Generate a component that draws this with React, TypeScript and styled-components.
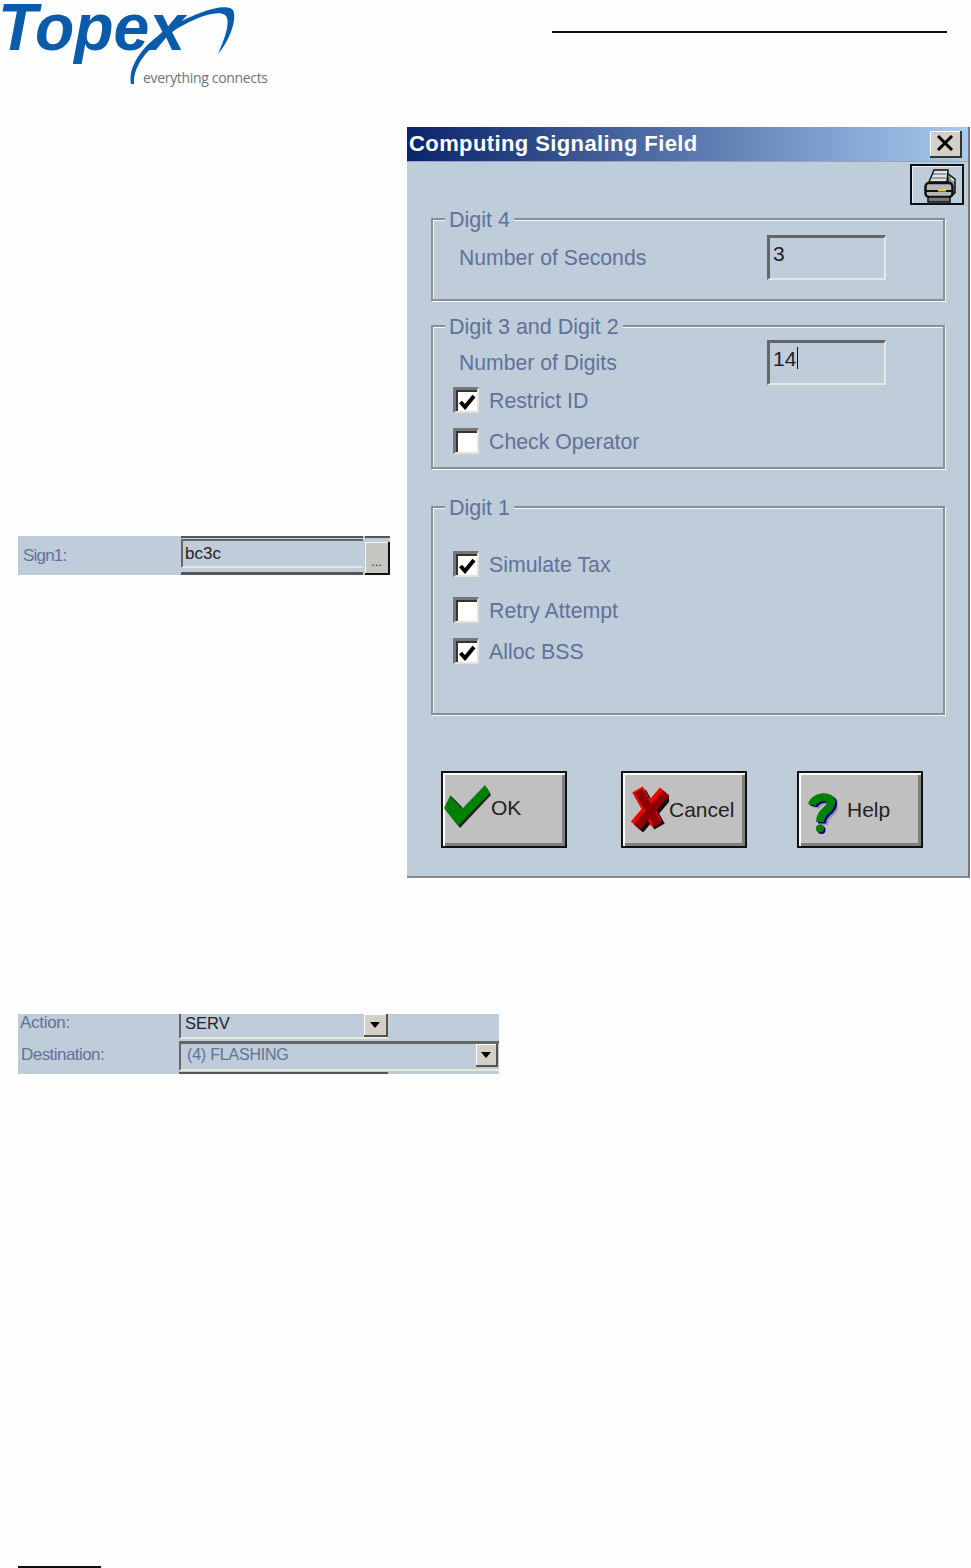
import styled, { createGlobalStyle } from "styled-components"

const panelColor = "#bfccd9"
const mutedText = "#5f7299"

const GlobalStyle = createGlobalStyle`
  html, body {
    margin: 0;
    padding: 0;
    background: #fff;
  }
  * {
    box-sizing: border-box;
  }
`

const Page = styled.div`
  width: 971px;
  height: 1568px;
  overflow: hidden;
  background: #fefefe;
  font-family: "Liberation Sans", Arial, sans-serif;
`

const Header = styled.header`
  display: flex;
  justify-content: space-between;
  align-items: flex-start;
  height: 127px;
`

const HeaderRule = styled.div`
  width: 395px;
  height: 2px;
  margin: 31px 24px 0 0;
  background: #111;
`

const MainRow = styled.div`
  display: flex;
  align-items: flex-start;
`

const LeftColumn = styled.div`
  width: 407px;
  padding: 409px 0 0 18px;
`

const Strip = styled.div<{ $width: number; $height: number }>`
  width: ${({ $width }) => $width}px;
  height: ${({ $height }) => $height}px;
  background: ${panelColor};
  overflow: hidden;
  font-size: 17px;
  color: ${mutedText};
`

const SignRow = styled.div`
  display: flex;
  height: 39px;
`

const StripLabel = styled.div<{ $indent?: number }>`
  width: 161px;
  padding-left: ${({ $indent }) => $indent ?? 3}px;
  letter-spacing: -0.3px;
`

const SignLabel = styled(StripLabel)`
  padding-top: 10px;
  width: 163px;
  padding-left: 5px;
  letter-spacing: -0.8px;
`

const SignStack = styled.div`
  width: 182px;
  display: flex;
  flex-direction: column;
`

const CutEdge = styled.div<{ $height: number }>`
  height: ${({ $height }) => $height}px;
  background: #555;
`

const SignInput = styled.div`
  height: 29px;
  margin: 1px 0 4px;
  padding: 3px 0 0 2px;
  border-top: 2px solid #666;
  border-left: 2px solid #666;
  border-bottom: 2px solid #e6e6de;
  color: #222;
  font-size: 17px;
`

const EllipsisColumn = styled.div`
  width: 25px;
  margin-left: 2px;
  display: flex;
  flex-direction: column;
`

const EllipsisButton = styled.div`
  height: 33px;
  margin-top: 4px;
  background: #c6c6c0;
  border-right: 2px solid #111;
  border-bottom: 2px solid #111;
  box-shadow: inset 1px 1px 0 #f4f4f0;
  display: flex;
  align-items: flex-end;
  justify-content: center;
  color: #333;
  font-size: 13px;
  line-height: 22px;
`

const Dialog = styled.section`
  width: 563px;
  height: 751px;
  background: ${panelColor};
  border-right: 2px solid #777;
  border-bottom: 2px solid #888;
  display: flex;
  flex-direction: column;
`

const TitleBar = styled.div`
  flex: none;
  height: 35px;
  display: flex;
  align-items: center;
  justify-content: space-between;
  padding: 0 6px 0 2px;
  background: linear-gradient(90deg, #0a246a, #a6caf0);
  border-bottom: 1px solid #9aa4b2;
`

const TitleText = styled.h1`
  margin: 0;
  color: #fff;
  font-size: 22px;
  font-weight: 700;
  letter-spacing: 0.4px;
`

const CloseButton = styled.div`
  width: 32px;
  height: 27px;
  background: #d4d0c8;
  border-right: 2px solid #333;
  border-bottom: 2px solid #333;
  box-shadow: inset 1px 1px 0 #fff;
  display: flex;
  align-items: center;
  justify-content: center;
`

const Toolbar = styled.div`
  flex: none;
  display: flex;
  justify-content: flex-end;
  padding: 2px 4px 0 0;
`

const PrintButton = styled.div`
  width: 54px;
  height: 41px;
  border: 2px solid #111;
  box-shadow: inset 1px 1px 0 #e8eef4;
  display: flex;
  align-items: center;
  justify-content: center;
`

const Group = styled.div<{ $top: number; $height: number; $pad: number }>`
  flex: none;
  position: relative;
  width: 514px;
  height: ${({ $height }) => $height}px;
  margin: ${({ $top }) => $top}px 0 0 24px;
  padding-top: ${({ $pad }) => $pad}px;
  border: 2px solid #8b8f96;
  box-shadow: 1px 1px 0 #f4f6f8, inset 1px 1px 0 #f4f6f8;
`

const GroupTitle = styled.div`
  position: absolute;
  top: -13px;
  left: 12px;
  padding: 0 4px;
  background: ${panelColor};
  color: ${mutedText};
  font-size: 21.5px;
  line-height: 26px;
`

const FieldRow = styled.div`
  display: flex;
  align-items: center;
  height: 45px;
`

const FieldLabel = styled.div`
  width: 308px;
  margin-left: 26px;
  color: ${mutedText};
  font-size: 21.2px;
`

const Field = styled.div`
  width: 119px;
  height: 45px;
  padding: 3px 0 0 3px;
  border-top: 3px solid #666;
  border-left: 3px solid #666;
  border-right: 2px solid #e8e8e0;
  border-bottom: 2px solid #e8e8e0;
  color: #222;
  font-size: 21px;
  line-height: 26px;
`

const Caret = styled.span`
  display: inline-block;
  width: 1px;
  height: 22px;
  margin-left: 1px;
  background: #111;
  vertical-align: -3px;
`

const CheckRow = styled.div<{ $gap: number }>`
  display: flex;
  align-items: center;
  height: 26px;
  margin: ${({ $gap }) => $gap}px 0 0 20px;
`

const CheckBox = styled.div`
  width: 26px;
  height: 26px;
  padding: 2px 0 0 2px;
  background: #fff;
  border-top: 3px solid #777;
  border-left: 3px solid #777;
  border-right: 2px solid #e4e2da;
  border-bottom: 2px solid #e4e2da;
  box-shadow: inset 2px 2px 0 #333;
  display: flex;
  align-items: center;
  justify-content: center;
`

const CheckLabel = styled.div`
  margin-left: 10px;
  padding-top: 2px;
  color: ${mutedText};
  font-size: 21.3px;
`

const ButtonRow = styled.div`
  flex: none;
  display: flex;
  margin: 56px 0 0 34px;
`

const DialogButton = styled.div<{ $gap: number; $pad: number; $labelGap: number }>`
  width: 126px;
  height: 77px;
  margin-right: ${({ $gap }) => $gap}px;
  padding-left: ${({ $pad }) => $pad}px;
  background: #c0c0c0;
  border: 2px solid #111;
  box-shadow: inset 2px 2px 0 #fff, inset -3px -3px 0 #808080;
  display: flex;
  align-items: center;
  gap: ${({ $labelGap }) => $labelGap}px;
  color: #222;
  font-size: 21px;
`

const ButtonLabel = styled.span<{ $lift?: number }>`
  margin-bottom: ${({ $lift }) => $lift ?? 0}px;
`

const LowerStrip = styled(Strip)`
  margin: 136px 0 0 18px;
  display: flex;
  flex-direction: column;
`

const ActionRow = styled.div`
  display: flex;
  height: 25px;
`

const ActionLabel = styled(StripLabel)`
  line-height: 18px;
`

const ActionField = styled.div`
  width: 209px;
  height: 25px;
  padding-left: 4px;
  border-left: 2px solid #666;
  border-bottom: 2px solid #e8e8e0;
  display: flex;
  justify-content: space-between;
  color: #222;
  font-size: 16.5px;
`

const DestRow = styled.div`
  display: flex;
  height: 30px;
  margin-top: 2px;
`

const DestLabel = styled(StripLabel)`
  padding-top: 4px;
  letter-spacing: -0.55px;
`

const DestField = styled.div`
  flex: 1;
  height: 30px;
  padding: 2px 0 0 6px;
  border-top: 3px solid #666;
  border-left: 2px solid #666;
  border-bottom: 2px solid #e8e8e0;
  display: flex;
  justify-content: space-between;
  color: ${mutedText};
  font-size: 16px;
  letter-spacing: -0.2px;
`

const ArrowButton = styled.div`
  width: 24px;
  height: 23px;
  background: #d4d0c8;
  border-right: 2px solid #555;
  border-bottom: 2px solid #555;
  box-shadow: inset 1px 1px 0 #fff;
  display: flex;
  align-items: center;
  justify-content: center;
`

const DestArrow = styled(ArrowButton)`
  width: 22px;
  margin: -2px 1px 0 0;
`

const Arrow = styled.div`
  width: 0;
  height: 0;
  border-left: 5px solid transparent;
  border-right: 5px solid transparent;
  border-top: 6px solid #000;
`

const BottomEdge = styled.div`
  width: 209px;
  height: 3px;
  margin: 1px 0 0 161px;
  background: #555;
`

const FooterRule = styled.div`
  width: 83px;
  height: 2px;
  margin: 492px 0 0 18px;
  background: #111;
`

function Logo() {
  return (
    <svg width="275" height="92" viewBox="0 0 275 92" aria-label="Topex">
      <text
        x="-2"
        y="50"
        fontFamily="Liberation Sans, Arial, sans-serif"
        fontStyle="italic"
        fontWeight="700"
        fontSize="66"
        fill="#0a5cab"
        textLength="187"
        lengthAdjust="spacingAndGlyphs"
      >
        Topex
      </text>
      <path
        d="M131 84 C127 62 150 38 176 24 C196 13 222 3 232 9 C238 14 232 38 218 54 C226 36 231 20 225 15 C216 9 190 20 172 32 C150 46 133 64 134 84Z"
        fill="#0a5cab"
      />
      <text x="143" y="83" fontFamily="Open Sans, sans-serif" fontSize="14" fill="#6f7479" textLength="125">
        everything connects
      </text>
    </svg>
  )
}

function PrinterIcon() {
  return (
    <svg width="40" height="37" viewBox="0 2 40 37">
      <path d="M30 9 L38 15 V29 L33 33 Z" fill="#8f8f8f" stroke="#111" strokeWidth="1.5" />
      <path d="M34 14 l3 3 M33 19 l4 3 M34 24 l3 2" stroke="#eee" strokeWidth="1.5" />
      <path d="M17 6 H31 L30 18 H12 Z" fill="#e4e4e4" stroke="#111" strokeWidth="1.5" />
      <path d="M16 10 H29 M15 14 H29" stroke="#555" strokeWidth="1.2" />
      <rect x="8.5" y="19" width="27" height="14" rx="3.5" fill="#b8b8b8" stroke="#111" strokeWidth="2.5" />
      <path d="M9 27 H35" stroke="#111" strokeWidth="2" />
      <rect x="21" y="25" width="8" height="2.5" fill="#e6d520" />
      <rect x="11" y="33" width="22" height="5" fill="#777" stroke="#111" strokeWidth="1.5" />
    </svg>
  )
}

function CheckMark() {
  return (
    <svg width="17" height="16" viewBox="0 0 17 16">
      <path d="M1.5 8 L6 13 L15 2" fill="none" stroke="#000" strokeWidth="4" />
    </svg>
  )
}

function OkIcon() {
  return (
    <svg width="48" height="56" viewBox="0 0 48 56">
      <path d="M7 13 L19 25 L20 28 L8 16 Z" fill="#111" />
      <path d="M2 27 L9 17 L20 30 L44 6 L48 13 L17 46 Z" fill="#222" />
      <path d="M1 26 L7 14 L19 27 L42 3 L47 11 L15 44 Z" fill="#008000" />
    </svg>
  )
}

function CancelIcon() {
  return (
    <svg width="40" height="52" viewBox="0 0 40 52">
      <g fill="none">
        <path d="M9 6 L28 40 M36 8 L7 42" stroke="#111" strokeWidth="12" transform="translate(2.5 2.5)" />
        <path d="M9 6 L28 40 M36 8 L7 42" stroke="#f00000" strokeWidth="12" transform="translate(-0.5 -0.5)" />
        <path d="M9 6 L28 40 M36 8 L7 42" stroke="#8b0000" strokeWidth="8" transform="translate(1 1)" />
      </g>
    </svg>
  )
}

function HelpIcon() {
  return (
    <svg width="34" height="60" viewBox="0 0 34 60">
      <g fill="none" strokeWidth="8" transform="translate(0 10)">
        <path d="M8 15 C10 6 28 4 27 13 C26 21 16 21 16 32" stroke="#9a9aa8" transform="translate(4 3)" />
        <path d="M8 15 C10 6 28 4 27 13 C26 21 16 21 16 32" stroke="#000080" transform="translate(2 1.5)" />
        <path d="M8 15 C10 6 28 4 27 13 C26 21 16 21 16 32" stroke="#008000" />
        <circle cx="17.5" cy="40" r="4" fill="#000080" stroke="none" />
        <circle cx="16" cy="38.5" r="4" fill="#008000" stroke="none" />
      </g>
    </svg>
  )
}

function Check({ label, checked, gap }: { label: string; checked?: boolean; gap: number }) {
  return (
    <CheckRow $gap={gap}>
      <CheckBox>{checked && <CheckMark />}</CheckBox>
      <CheckLabel>{label}</CheckLabel>
    </CheckRow>
  )
}

export default function App() {
  return (
    <Page>
      <GlobalStyle />
      <Header>
        <Logo />
        <HeaderRule />
      </Header>
      <MainRow>
        <LeftColumn>
          <Strip $width={372} $height={39}>
            <SignRow>
              <SignLabel>Sign1:</SignLabel>
              <SignStack>
                <CutEdge $height={2} />
                <SignInput>bc3c</SignInput>
                <CutEdge $height={3} />
              </SignStack>
              <EllipsisColumn>
                <CutEdge $height={2} />
                <EllipsisButton>...</EllipsisButton>
              </EllipsisColumn>
            </SignRow>
          </Strip>
        </LeftColumn>
        <Dialog>
          <TitleBar>
            <TitleText>Computing Signaling Field</TitleText>
            <CloseButton>
              <svg width="18" height="16" viewBox="0 0 18 16">
                <path d="M2 1 L16 15 M16 1 L2 15" stroke="#000" strokeWidth="3" />
              </svg>
            </CloseButton>
          </TitleBar>
          <Toolbar>
            <PrintButton>
              <PrinterIcon />
            </PrintButton>
          </Toolbar>
          <Group $top={13} $height={83} $pad={15}>
            <GroupTitle>Digit 4</GroupTitle>
            <FieldRow>
              <FieldLabel>Number of Seconds</FieldLabel>
              <Field>3</Field>
            </FieldRow>
          </Group>
          <Group $top={24} $height={144} $pad={13}>
            <GroupTitle>Digit 3 and Digit 2</GroupTitle>
            <FieldRow>
              <FieldLabel>Number of Digits</FieldLabel>
              <Field>
                14
                <Caret />
              </Field>
            </FieldRow>
            <Check label="Restrict ID" checked gap={2} />
            <Check label="Check Operator" gap={15} />
          </Group>
          <Group $top={37} $height={209} $pad={43}>
            <GroupTitle>Digit 1</GroupTitle>
            <Check label="Simulate Tax" checked gap={0} />
            <Check label="Retry Attempt" gap={20} />
            <Check label="Alloc BSS" checked gap={15} />
          </Group>
          <ButtonRow>
            <DialogButton $gap={54} $pad={0} $labelGap={0}>
              <OkIcon />
              <ButtonLabel $lift={3}>OK</ButtonLabel>
            </DialogButton>
            <DialogButton $gap={50} $pad={6} $labelGap={0}>
              <CancelIcon />
              <ButtonLabel>Cancel</ButtonLabel>
            </DialogButton>
            <DialogButton $gap={0} $pad={5} $labelGap={9}>
              <HelpIcon />
              <ButtonLabel>Help</ButtonLabel>
            </DialogButton>
          </ButtonRow>
        </Dialog>
      </MainRow>
      <LowerStrip $width={481} $height={60}>
        <ActionRow>
          <ActionLabel $indent={2}>Action:</ActionLabel>
          <ActionField>
            SERV
            <ArrowButton>
              <Arrow />
            </ArrowButton>
          </ActionField>
        </ActionRow>
        <DestRow>
          <DestLabel>Destination:</DestLabel>
          <DestField>
            (4) FLASHING
            <DestArrow>
              <Arrow />
            </DestArrow>
          </DestField>
        </DestRow>
        <BottomEdge />
      </LowerStrip>
      <FooterRule />
    </Page>
  )
}
